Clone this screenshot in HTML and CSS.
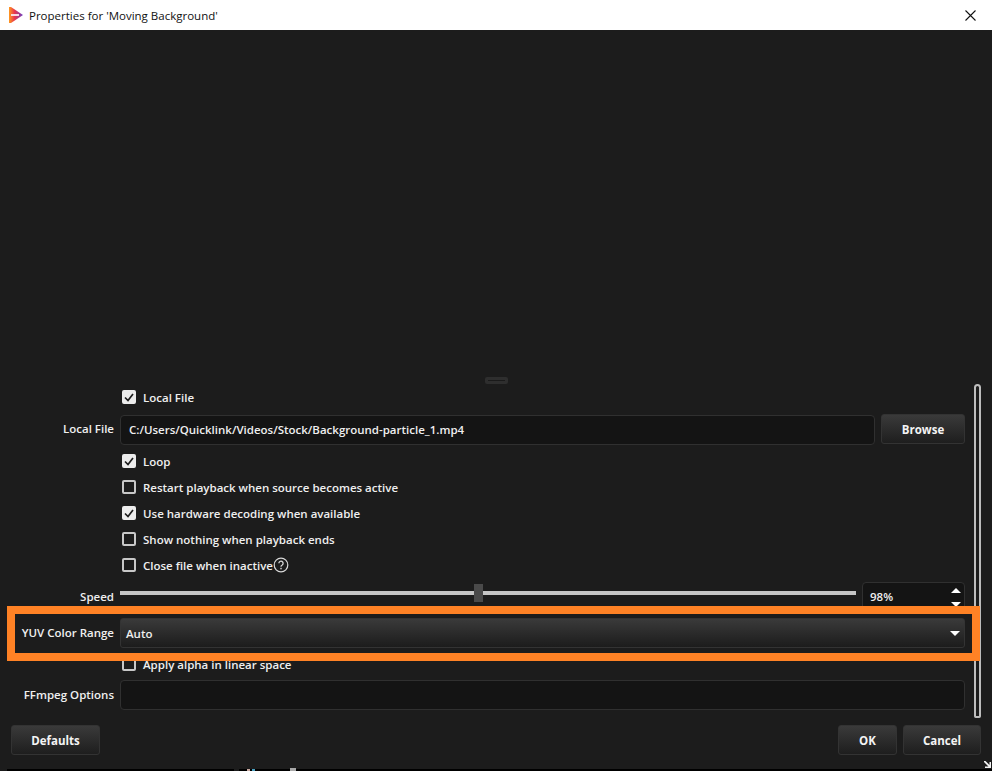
FILE: index.html
```html
<!DOCTYPE html>
<html lang="en">
<head>
<meta charset="utf-8">
<title>Properties for 'Moving Background'</title>
<link rel="stylesheet" href="styles.css">
</head>
<body>
<div class="window">
  <header class="titlebar">
    <svg class="logo" width="14" height="16" viewBox="0 0 14 16">
      <defs><linearGradient id="lg" x1="0" x2="1" y1="0" y2="0"><stop offset="0" stop-color="#ff9a1f"/><stop offset=".4" stop-color="#e8344e"/><stop offset="1" stop-color="#6a3fc4"/></linearGradient></defs>
      <path d="M0 0h2l12 8-12 8H0z" fill="url(#lg)"/>
      <rect x="2" y="7" width="8" height="2" fill="#f6d9e2"/>
    </svg>
    <span class="title">Properties for 'Moving Background'</span>
    <svg class="close" width="11" height="11" viewBox="0 0 11 11"><path d="M.5.5l10 10M10.5.5l-10 10" stroke="#111" stroke-width="1.1" fill="none"/></svg>
  </header>
  <div class="preview"></div>
  <div class="splitter"><span class="handle"></span></div>
  <main class="content">
    <div class="form">
      <div class="row check-row"><span class="label"></span><label class="check"><span class="box on"><svg width="10" height="9" viewBox="0 0 10 9"><path d="M1 4.5l3 3L9 1" stroke="#1c1c1c" stroke-width="1.7" fill="none"/></svg></span>Local File</label></div>
      <div class="row file-row"><span class="label">Local File</span><div class="field"><div class="input grow path">C:/Users/Quicklink/Videos/Stock/Background-particle_1.mp4</div><button class="btn browse">Browse</button></div></div>
      <div class="row check-row"><span class="label"></span><label class="check"><span class="box on"><svg width="10" height="9" viewBox="0 0 10 9"><path d="M1 4.5l3 3L9 1" stroke="#1c1c1c" stroke-width="1.7" fill="none"/></svg></span>Loop</label></div>
      <div class="row check-row"><span class="label"></span><label class="check"><span class="box"></span>Restart playback when source becomes active</label></div>
      <div class="row check-row"><span class="label"></span><label class="check"><span class="box on"><svg width="10" height="9" viewBox="0 0 10 9"><path d="M1 4.5l3 3L9 1" stroke="#1c1c1c" stroke-width="1.7" fill="none"/></svg></span>Use hardware decoding when available</label></div>
      <div class="row check-row"><span class="label"></span><label class="check"><span class="box"></span>Show nothing when playback ends</label></div>
      <div class="row check-row"><span class="label"></span><label class="check"><span class="box"></span>Close file when inactive<svg class="help" width="16" height="16" viewBox="0 0 16 16"><circle cx="8" cy="8" r="6.8" stroke="#d8d8d8" stroke-width="1.2" fill="none"/><path d="M5.9 6.3a2.1 2.1 0 1 1 3.3 1.7c-.8.5-1.2.9-1.2 1.8" stroke="#d8d8d8" stroke-width="1.3" fill="none"/><rect x="7.3" y="10.8" width="1.4" height="1.5" fill="#d8d8d8"/></svg></label></div>
      <div class="row speed-row"><span class="label">Speed</span><div class="field">
        <div class="slider grow"><span class="track"></span><span class="thumb"></span></div>
        <div class="input spin">98%<span class="up"></span><span class="down"></span></div>
      </div></div>
      <div class="row yuv-row"><span class="label">YUV Color Range</span><div class="field"><div class="select grow">Auto<span class="caret"></span></div></div></div>
      <div class="row check-row"><span class="label"></span><label class="check"><span class="box"></span>Apply alpha in linear space</label></div>
      <div class="row ff-row"><span class="label">FFmpeg Options</span><div class="field"><div class="input grow"></div></div></div>
    </div>
    <div class="scrollbar"></div>
  </main>
  <footer class="footer">
    <button class="btn defaults">Defaults</button>
    <span class="grow"></span>
    <button class="btn ok">OK</button>
    <button class="btn cancel">Cancel</button>
  </footer>
  <svg class="grip" width="8" height="8" viewBox="0 0 8 8"><path d="M0 1h1.5l4 4V2H7v6H1V6.500h3.500l-4.500-4.500z" fill="#f2f2f2"/></svg>
  <div class="highlight"></div>
  <div class="strip"><span class="s1"></span><span class="s2"></span><span class="s3"></span><span class="s4"></span></div>
</div>
</body>
</html>
```
FILE: styles.css
```css
* { box-sizing: border-box; }
html, body { margin: 0; padding: 0; }
body { background: #1c1c1c; font-family: "Open Sans", "Liberation Sans", sans-serif; overflow: hidden; }
.window { position: relative; width: 992px; height: 771px; display: flex; flex-direction: column; background: #1c1c1c; color: #efefef; font-size: 11.5px; font-weight: 600; }
.titlebar { height: 30px; flex: none; background: #fff; display: flex; align-items: center; padding: 0 16px 0 9px; }
.logo { flex: none; margin-right: 6px; }
.title { color: #111; font-size: 11.5px; font-weight: 400; flex: 1; }
.close { flex: none; }
.preview { height: 345px; flex: none; }
.splitter { height: 9px; flex: none; display: flex; justify-content: center; align-items: flex-end; padding-right: 0; }
.handle { width: 23px; height: 7px; background: #2e2e2e; border-radius: 2px; display: flex; margin-left: 1px; position: relative; }
.handle::after { content: ""; margin: 3px 3px 0; height: 1px; width: 17px; background: #1a1a1a; }
.content { height: 334px; flex: none; display: flex; align-items: flex-start; }
.form { width: 965px; flex: none; display: flex; flex-direction: column; }
.row { display: flex; }
.label { width: 114px; flex: none; text-align: right; margin-right: 6px; white-space: nowrap; }
.field { flex: 1; display: flex; gap: 6px; }
.grow { flex: 1; }
.check-row { height: 26px; align-items: center; }
.check { display: flex; align-items: center; margin-left: 2px; white-space: nowrap; }
.box { width: 14px; height: 14px; border: 2px solid #c8c8c8; border-radius: 2px; margin-right: 7px; display: flex; align-items: center; justify-content: center; flex: none; }
.box.on { background: #ececec; border-color: #ececec; }
.box svg { flex: none; margin: -1px; }
.help { margin-left: 0; }
.file-row { height: 38px; padding-top: 4px; align-items: flex-start; }
.file-row .label { line-height: 30px; }
.input { height: 30px; background: #141414; border: 1px solid #303030; border-radius: 4px; }
.path { margin-top: 1px; padding: 0 8px; line-height: 28px; }
.btn { font: inherit; color: #f4f4f4; height: 30px; border: 1px solid #333; border-radius: 3px; background: linear-gradient(#3a3a3a, #1e1e1e); padding: 0; font-weight: 700; }
.browse { width: 84px; flex: none; }
.speed-row { height: 38px; padding-top: 4px; }
.speed-row .label { line-height: 30px; }
.slider { position: relative; height: 30px; }
.track { display: block; position: absolute; left: 0; right: 0; top: 9px; height: 4px; background: #c6c6c6; }
.thumb { position: absolute; left: 354px; top: 2px; width: 9px; height: 18px; background: #4a4a4a; }
.spin { width: 103px; flex: none; position: relative; padding-left: 7px; line-height: 28px; }
.spin::before { content: ""; }
.up, .down { position: absolute; right: 3px; width: 0; height: 0; border-left: 5px solid transparent; border-right: 5px solid transparent; }
.up { top: 5px; border-bottom: 5px solid #fff; }
.down { top: 19px; border-top: 5px solid #fff; }
.yuv-row { height: 35px; padding-top: 2px; }
.yuv-row .label { line-height: 30px; }
.select { height: 30px; position: relative; background: linear-gradient(#3a3a3a, #1c1c1c); border: 1px solid #333; border-radius: 3px; padding-left: 5px; line-height: 30px; }
.caret { position: absolute; right: 4px; top: 12px; width: 0; height: 0; border-left: 5px solid transparent; border-right: 5px solid transparent; border-top: 5px solid #fff; }
.ff-row { height: 36px; padding-top: 3px; }
.ff-row .label { line-height: 30px; }
.scrollbar { width: 7px; height: 334px; margin-left: 9px; flex: none; border: 2px solid #bdbdbd; border-radius: 4px 4px 2px 2px; background: #1c1c1c; }
.footer { margin-top: 7px; height: 30px; flex: none; display: flex; gap: 6px; padding: 0 11px; }
.defaults { width: 89px; }
.ok { width: 59px; }
.cancel { width: 78px; }
.grip { position: absolute; left: 984px; top: 760px; }
.highlight { position: absolute; left: 7px; top: 606px; width: 973px; height: 55px; border: 8px solid #ff8225; }
.strip { position: absolute; left: 7px; right: 0; bottom: 0; height: 2px; background: #000; }
.strip span { position: absolute; bottom: 0; height: 2px; }
.s1 { left: 227px; width: 5px; background: #1c1c1c; }
.s2 { left: 240px; width: 3px; background: #c9a9a0; }
.s3 { left: 245px; width: 3px; background: #4aa0c0; }
.s4 { left: 283px; width: 6px; background: #a8a8a8; height: 3px !important; }
```
